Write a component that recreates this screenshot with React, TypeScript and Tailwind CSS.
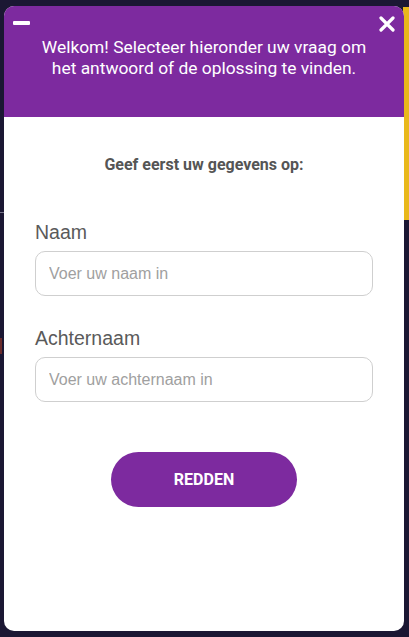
import { useState } from 'react';

export default function App() {
  const [formData, setFormData] = useState({ naam: '', achternaam: '' });

  return (
    <div className="relative h-[637px] w-[409px] overflow-hidden bg-[#1b1733]">
      {/* background bits peeking out behind the widget */}
      <div className="absolute right-0 top-[7px] h-[213px] w-[6px] bg-[#e9b81a]" />
      <div className="absolute left-0 top-[212px] h-px w-[4px] bg-[#77758a]" />
      <div className="absolute left-0 top-[338px] h-[16px] w-[2px] bg-[#6b2c2c]" />

      <div className="relative ml-[4px] mt-[6px] flex h-[625px] w-[400px] flex-col overflow-hidden rounded-[10px] bg-white">
        <div className="relative h-[111px] shrink-0 bg-[#7d2a9f] px-[30px] pt-[31px]">
          <button type="button" className="absolute left-[9px] top-[15px] h-[4px] w-[17px] rounded-[1px] bg-white" aria-label="Minimaliseren" />
          <button type="button" className="absolute right-[9px] top-[10px] flex h-[16px] w-[16px] items-center justify-center" aria-label="Sluiten">
            <svg viewBox="0 0 16 16" width="16" height="16">
              <path d="M2 2 L14 14 M14 2 L2 14" stroke="white" strokeWidth="3.2" strokeLinecap="round" />
            </svg>
          </button>
          <p className="text-center font-['Roboto',sans-serif] text-[17.4px] leading-[21px] text-white">
            Welkom! Selecteer hieronder uw vraag om het antwoord of de oplossing te vinden.
          </p>
        </div>

        <div className="flex flex-col px-[31px] pt-[38px]">
          <p className="text-center font-['Roboto',sans-serif] text-[16px] font-bold leading-[20px] text-[#555555]">
            Geef eerst uw gegevens op:
          </p>

          <label htmlFor="naam" className="mt-[46px] block font-['Liberation_Sans',Arial,sans-serif] text-[19.5px] leading-[22px] text-[#5a5a5a]">
            Naam
          </label>
          <input
            id="naam"
            type="text"
            value={formData.naam}
            onChange={(e) => setFormData({ ...formData, naam: e.target.value })}
            placeholder="Voer uw naam in"
            className="mt-[8px] h-[45px] w-full rounded-[10px] border border-[#cfcfcf] px-[13px] font-['Liberation_Sans',Arial,sans-serif] text-[16px] text-[#444] placeholder:text-[#a0a0a0] focus:outline-none"
          />

          <label htmlFor="achternaam" className="mt-[31px] block font-['Liberation_Sans',Arial,sans-serif] text-[19.5px] leading-[22px] text-[#5a5a5a]">
            Achternaam
          </label>
          <input
            id="achternaam"
            type="text"
            value={formData.achternaam}
            onChange={(e) => setFormData({ ...formData, achternaam: e.target.value })}
            placeholder="Voer uw achternaam in"
            className="mt-[8px] h-[45px] w-full rounded-[10px] border border-[#cfcfcf] px-[13px] font-['Liberation_Sans',Arial,sans-serif] text-[16px] text-[#444] placeholder:text-[#a0a0a0] focus:outline-none"
          />

          <div className="mt-[50px] flex justify-center">
            <button
              type="button"
              className="h-[55px] w-[186px] rounded-full bg-[#7d2a9f] font-['Roboto',sans-serif] text-[16px] font-bold text-white"
            >
              REDDEN
            </button>
          </div>
        </div>
      </div>
    </div>
  );
}
